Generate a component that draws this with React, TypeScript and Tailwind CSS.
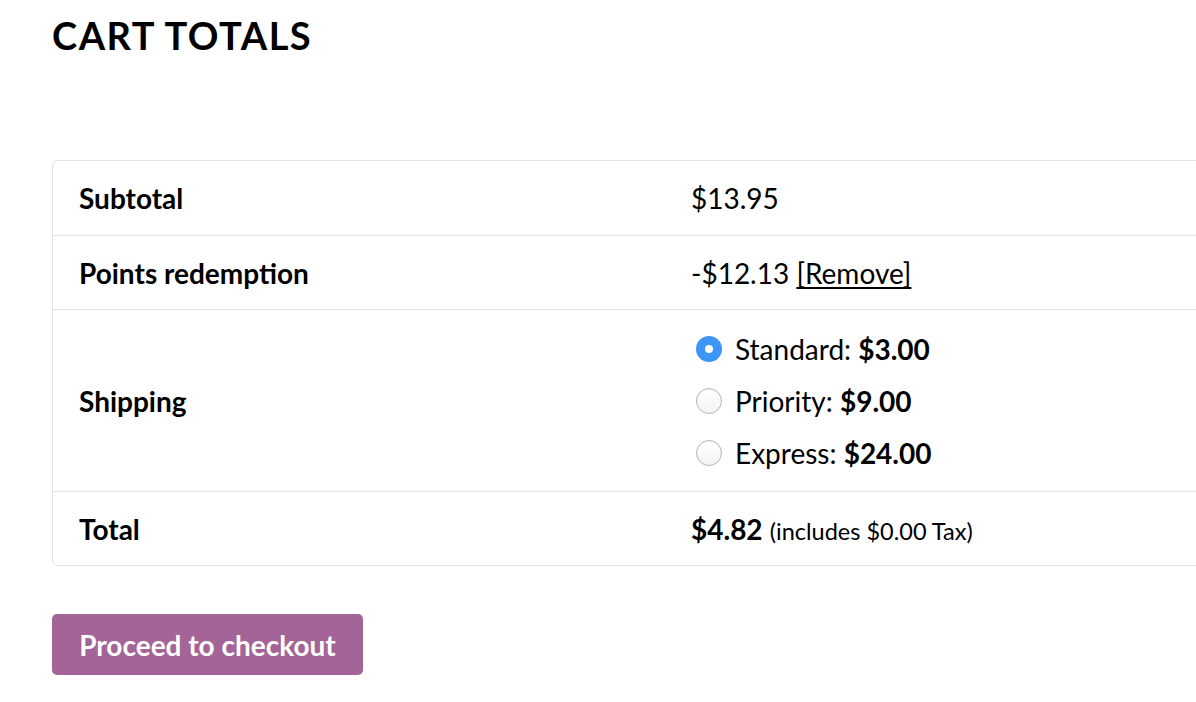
import React from 'react';

const options = [
  { label: 'Standard', price: '$3.00', checked: true },
  { label: 'Priority', price: '$9.00', checked: false },
  { label: 'Express', price: '$24.00', checked: false },
];

function Radio({ checked }: { checked: boolean }) {
  if (checked) {
    return (
      <span className="w-[26px] h-[26px] rounded-full bg-[#3d95f7] flex items-center justify-center shrink-0">
        <span className="w-[8px] h-[8px] rounded-full bg-white" />
      </span>
    );
  }
  return (
    <span className="w-[26px] h-[26px] rounded-full border border-[#b5b5b5] bg-gradient-to-b from-white to-[#f3f3f3] shrink-0 shadow-[inset_0_1px_1px_rgba(0,0,0,0.05)]" />
  );
}

export default function App() {
  return (
    <div className="w-[1196px] h-[702px] overflow-hidden bg-white text-black font-['Lato','Liberation_Sans',sans-serif]">
      <div className="pl-[52px] pt-[10px]">
        <h2 className="text-[38px] leading-[50px] font-bold tracking-[1.5px]">CART TOTALS</h2>

        <div className="mt-[100px] w-[1200px] border border-[#e2e2e2] rounded-[6px] text-[28px]">
          <div className="flex h-[75px] border-b border-[#e2e2e2]">
            <div className="w-[612px] pl-[26px] flex items-center font-bold">Subtotal</div>
            <div className="pl-[26px] flex items-center">$13.95</div>
          </div>
          <div className="flex h-[74px] border-b border-[#e2e2e2]">
            <div className="w-[612px] pl-[26px] flex items-center font-bold">Points redemption</div>
            <div className="pl-[26px] flex items-center">
              <span>
                -$12.13{' '}
                <span className="underline underline-offset-[3px] [text-decoration-skip-ink:none]">[Remove]</span>
              </span>
            </div>
          </div>
          <div className="flex h-[182px] border-b border-[#e2e2e2]">
            <div className="w-[612px] pl-[26px] flex items-center font-bold">Shipping</div>
            <div className="pl-[31px] flex flex-col justify-center">
              {options.map((o) => (
                <label key={o.label} className="h-[52px] flex items-center gap-[13px] leading-[36px]">
                  <Radio checked={o.checked} />
                  <span>
                    {o.label}: <span className="font-bold">{o.price}</span>
                  </span>
                </label>
              ))}
            </div>
          </div>
          <div className="flex h-[73px]">
            <div className="w-[612px] pl-[26px] flex items-center font-bold">Total</div>
            <div className="pl-[26px] flex items-center">
              <span>
                <span className="font-bold">$4.82</span>{' '}
                <span className="text-[23.5px]">(includes $0.00 Tax)</span>
              </span>
            </div>
          </div>
        </div>

        <button className="mt-[48px] w-[311px] h-[61px] rounded-[5px] bg-[#a46497] text-white text-[28px] font-bold leading-none">
          Proceed to checkout
        </button>
      </div>
    </div>
  );
}
